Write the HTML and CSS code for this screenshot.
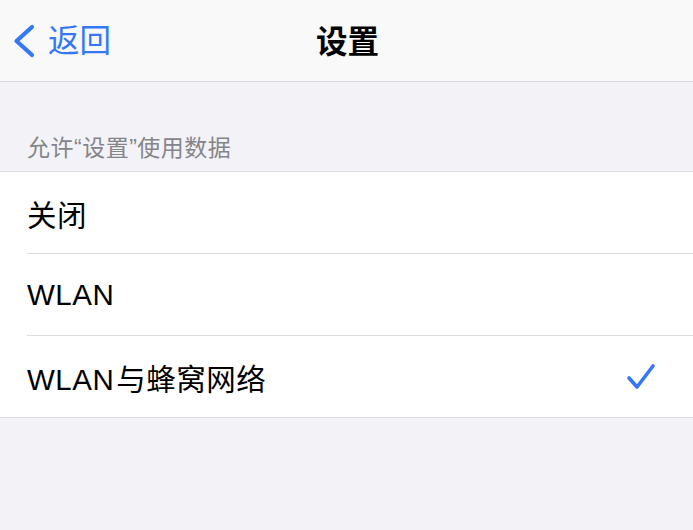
FILE: index.html
```html
<!DOCTYPE html>
<html lang="zh-CN">
<head>
<meta charset="utf-8">
<title>设置</title>
<link rel="stylesheet" href="styles.css">
</head>
<body>
<header class="navbar">
  <div class="back">
    <svg class="chevron" width="24" height="34" viewBox="0 0 24 34"><path d="M21 3 L5.5 17 L21 31" fill="none" stroke="#3478f6" stroke-width="4.2" stroke-linecap="round" stroke-linejoin="round"/></svg>
    <span class="back-text">返回</span>
  </div>
  <h1 class="title">设置</h1>
</header>
<div class="section-header">允许“设置”使用数据</div>
<ul class="group">
  <li class="row"><span>关闭</span></li>
  <li class="row"><span>WLAN</span></li>
  <li class="row"><span>WLAN<span class="gap"></span>与蜂窝网络</span>
    <svg class="check" width="30" height="28" viewBox="0 0 30 28"><path d="M3 15 L11 24 L27 3" fill="none" stroke="#3478f6" stroke-width="3.6" stroke-linecap="round" stroke-linejoin="round"/></svg>
  </li>
</ul>
</body>
</html>
```
FILE: styles.css
```css
html, body {
  margin: 0;
  padding: 0;
}
body {
  background: #f2f2f7;
  font-family: "Liberation Sans", "Noto Sans CJK SC", sans-serif;
  color: #000;
  height: 530px;
  overflow: hidden;
}
.navbar {
  position: relative;
  height: 81px;
  background: #f9f9f9;
  border-bottom: 1px solid #d9d9dc;
  display: flex;
  align-items: center;
  justify-content: center;
}
.back {
  position: absolute;
  left: 11px;
  top: 24px;
  display: flex;
  align-items: center;
  gap: 13px;
}
.chevron {
  display: block;
}
.back-text {
  color: #3478f6;
  font-size: 31.5px;
  line-height: 34px;
}
.title {
  margin: 0;
  font-size: 31.5px;
  font-weight: bold;
  line-height: 34px;
  padding-top: 2px;
  padding-left: 2px;
}
.section-header {
  height: 90px;
  box-sizing: border-box;
  padding: 0 27px 9px;
  display: flex;
  align-items: flex-end;
  color: #858589;
  font-size: 23px;
  letter-spacing: 0.5px;
  line-height: 27px;
  border-bottom: 1px solid #dcdce0;
}
.group {
  list-style: none;
  margin: 0;
  padding: 0 0 0 27px;
  background: #fff;
  border-bottom: 1px solid #dcdce0;
}
.row {
  height: 81px;
  display: flex;
  align-items: center;
  justify-content: space-between;
  padding-right: 37px;
  font-size: 29.5px;
  letter-spacing: 0.5px;
  border-bottom: 1px solid #dcdce0;
}
.row:last-child {
  border-bottom: none;
}
.gap {
  display: inline-block;
  width: 2px;
}
.check {
  display: block;
}
```
